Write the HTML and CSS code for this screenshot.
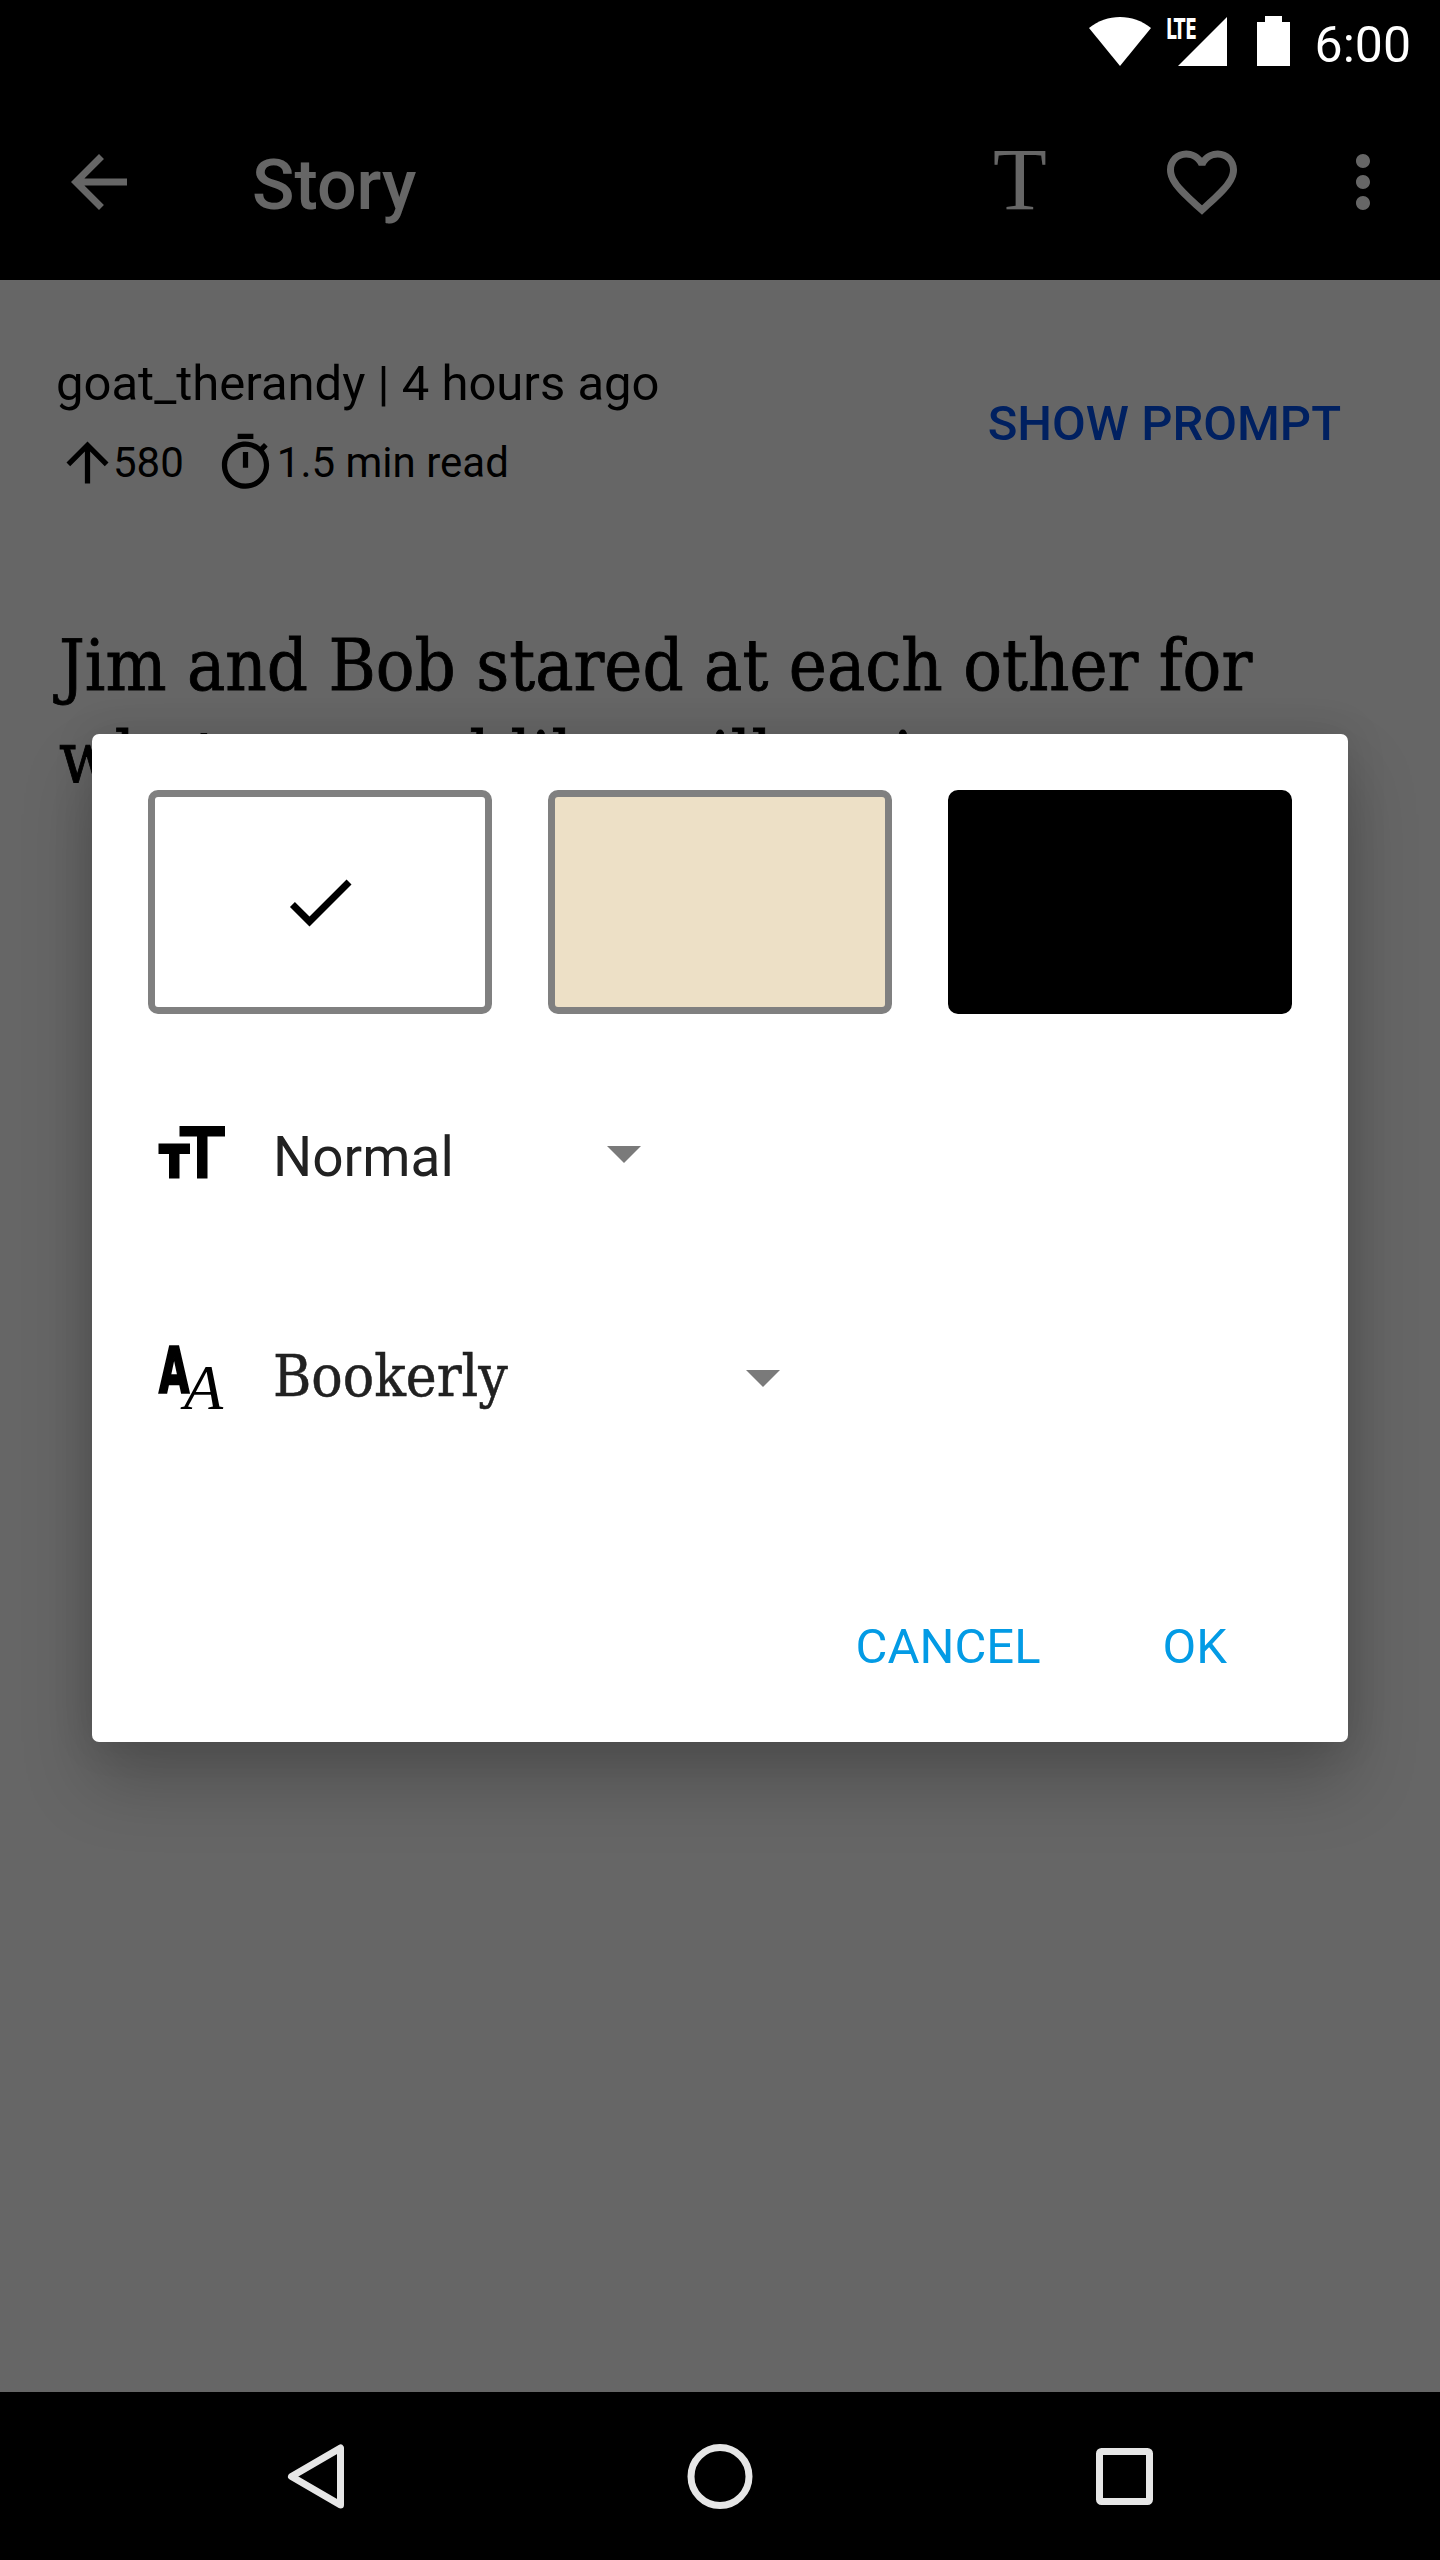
FILE: index.html
```html
<!DOCTYPE html>
<html lang="en">
<head>
    <meta charset="UTF-8">
    <title>Story</title>
    <link rel="stylesheet" href="styles.css">
</head>

<body>
<div class="screen">
    <!-- status bar -->
    <div class="statusbar">
        <svg class="st-wifi" viewBox="0 0 62 49"><path d="M0 11C18-3.6 44-3.6 62 11L31 49z"/></svg>
        <svg class="st-signal" viewBox="0 0 61 49">
            <path d="M61 0V49H12z"/>
            <text class="st-lte" x="0" y="22" textLength="31" lengthAdjust="spacingAndGlyphs">LTE</text>
        </svg>
        <svg class="st-battery" viewBox="0 0 33 50"><path d="M8 0H25V6H33V50H0V6H8z"/></svg>
        <span class="st-time">6:00</span>
    </div>

    <!-- toolbar -->
    <header class="toolbar">
        <svg class="ico back" viewBox="0 0 24 24"><path d="M20 11H7.83l5.59-5.59L12 4l-8 8 8 8 1.41-1.41L7.83 13H20v-2z"/></svg>
        <h1 class="title">Story</h1>
        <span class="tool-t">T</span>
        <svg class="ico heart" viewBox="0 0 24 24"><path d="M16.5 3c-1.74 0-3.41.81-4.5 2.09C10.91 3.81 9.24 3 7.5 3 4.42 3 2 5.42 2 8.5c0 3.78 3.4 6.86 8.55 11.54L12 21.35l1.45-1.32C18.6 15.36 22 12.28 22 8.5 22 5.42 19.58 3 16.5 3zm-4.4 15.55l-.1.1-.1-.1C7.14 14.24 4 11.39 4 8.5 4 6.5 5.5 5 7.5 5c1.54 0 3.04.99 3.57 2.36h1.87C13.46 5.99 14.96 5 16.5 5c2 0 3.5 1.5 3.5 3.5 0 2.89-3.14 5.74-7.9 10.05z"/></svg>
        <svg class="ico" viewBox="0 0 24 24"><path d="M12 8c1.1 0 2-.9 2-2s-.9-2-2-2-2 .9-2 2 .9 2 2 2zm0 2c-1.1 0-2 .9-2 2s.9 2 2 2 2-.9 2-2-.9-2-2-2zm0 6c-1.1 0-2 .9-2 2s.9 2 2 2 2-.9 2-2-.9-2-2-2z"/></svg>
    </header>

    <!-- story -->
    <main class="story">
        <div class="story-head">
            <div class="story-info">
                <p class="byline">goat_therandy | 4 hours ago</p>
                <div class="meta">
                    <svg class="meta-ico" viewBox="0 0 24 24"><path d="M4 12l1.41 1.41L11 7.83V20h2V7.83l5.58 5.59L20 12l-8-8-8 8z"/></svg>
                    <span class="votes">580</span>
                    <svg class="meta-ico timer" viewBox="0 0 24 24"><path d="M15 1H9v2h6V1zm-4 13h2V8h-2v6zm8.03-6.61l1.42-1.42c-.43-.51-.9-.99-1.41-1.41l-1.42 1.42C16.07 4.74 14.12 4 12 4c-4.97 0-9 4.03-9 9s4.02 9 9 9 9-4.03 9-9c0-2.12-.74-4.07-1.97-5.61zM12 20c-3.87 0-7-3.13-7-7s3.13-7 7-7 7 3.13 7 7-3.13 7-7 7z"/></svg>
                    <span class="readtime">1.5 min read</span>
                </div>
            </div>
            <a class="show-prompt" href="#">SHOW PROMPT</a>
        </div>
        <p class="story-text">Jim and Bob stared at each other for what seemed like millennia</p>
    </main>

    <!-- nav bar -->
    <nav class="navbar">
        <svg class="nav-ico" viewBox="0 0 84 84"><path d="M66.5 14V71L17.5 42.5z"/></svg>
        <svg class="nav-ico" viewBox="0 0 84 84"><circle cx="42" cy="42.5" r="29"/></svg>
        <svg class="nav-ico" viewBox="0 0 84 84"><rect x="17.5" y="17.5" width="50" height="50" rx="2"/></svg>
    </nav>

    <!-- dialog with scrim -->
    <div class="scrim">
        <div class="dialog">
            <div class="swatches">
                <button class="swatch swatch-white">
                    <svg class="ico" viewBox="0 0 24 24"><path d="M9 16.17L4.83 12l-1.41 1.41L9 19 21 7l-1.41-1.41z"/></svg>
                </button>
                <button class="swatch swatch-sepia"></button>
                <button class="swatch swatch-black"></button>
            </div>

            <div class="option option-size">
                <svg class="ico" viewBox="0 0 24 24"><path d="M9 4v3h5v12h3V7h5V4H9zm-6 8h3v7h3v-7h3V9H3v3z"/></svg>
                <div class="spinner spinner-size">
                    <span class="spinner-label">Normal</span>
                    <i class="caret"></i>
                </div>
            </div>

            <div class="option option-font">
                <svg class="ico aa" viewBox="0 0 84 84">
                    <text class="aa-big" transform="translate(11 56) scale(.62 1)" x="0" y="0">A</text>
                    <text class="aa-small" x="36" y="73">A</text>
                </svg>
                <div class="spinner spinner-font">
                    <span class="spinner-label bookerly">Bookerly</span>
                    <i class="caret"></i>
                </div>
            </div>

            <div class="actions">
                <a class="action" href="#">CANCEL</a>
                <a class="action" href="#">OK</a>
            </div>
        </div>
    </div>
</div>
</body>
</html>
```

FILE: styles.css
```css
html,body{
    margin: 0; padding: 0;
}
body{
    background-color: #000;
    font-family: Roboto, "Noto Sans", sans-serif;
}
p,h1{
    margin: 0;
}
a{
    text-decoration: none;
}
.screen{
    position: relative;
    width: 1440px; height: 2560px;
    display: flex; flex-direction: column;
    overflow: hidden;
}
.ico{
    width: 84px; height: 84px;
    flex: none;
    display: block;
}

/* status bar */
.statusbar{
    height: 84px;
    flex: none;
    background-color: #000;
    display: flex; align-items: flex-start; justify-content: flex-end;
    padding-right: 29px;
    box-sizing: border-box;
    fill: #fff; color: #fff;
}
.st-wifi{
    width: 62px; height: 49px;
    margin-top: 17px;
}
.st-signal{
    width: 61px; height: 49px;
    margin: 17px 0 0 15px;
    overflow: visible;
}
.st-lte{
    font-family: "DejaVu Sans Condensed", "DejaVu Sans", sans-serif;
    font-weight: bold;
    font-size: 28px;
}
.st-battery{
    width: 33px; height: 50px;
    margin: 16px 0 0 30px;
}
.st-time{
    font-size: 50px;
    line-height: 58px;
    margin: 16px 0 0 25px;
}

/* toolbar */
.toolbar{
    height: 196px;
    flex: none;
    background-color: #000;
    display: flex; align-items: center;
    padding: 0 35px 0 57px;
    fill: #fff; color: #fff;
}
.title{
    flex: 1;
    margin: 6px 0 0 111px;
    font-size: 70px;
    font-weight: 500;
}
.tool-t{
    width: 84px;
    margin: -4px 98px 0 0;
    text-align: center;
    font-family: "Liberation Serif", serif;
    font-size: 88px;
    line-height: 84px;
}
.heart{
    margin-right: 77px;
}

/* story */
.story{
    flex: 1;
    background-color: #fff;
    padding: 75px 56px 0;
    color: #000;
}
.story-head{
    display: flex; align-items: center; justify-content: space-between;
}
.byline{
    font-size: 49px;
    line-height: 58px;
}
.meta{
    display: flex; align-items: center;
    margin-top: 18px;
    font-size: 42px;
}
.meta-ico{
    width: 63px; height: 63px;
    flex: none;
}
.votes{
    margin-left: -6px;
}
.timer{
    margin-left: 30px;
}
.show-prompt{
    margin: 0 43px 3px 0;
    color: #0050f0;
    font-size: 49px;
    font-weight: 500;
}
.story-text{
    margin-top: 126px;
    padding-left: 3px;
    font-family: "DejaVu Serif Condensed", "DejaVu Serif", serif;
    font-size: 71.6px;
    line-height: 92px;
    -webkit-text-stroke: .8px #000;
}

/* nav bar */
.navbar{
    height: 168px;
    flex: none;
    background-color: #000;
    display: flex; align-items: center; justify-content: center;
    gap: 320px;
}
.nav-ico{
    width: 84px; height: 84px;
    fill: none;
    stroke: #e6e6e6; stroke-width: 7px; stroke-linejoin: round;
}

/* dialog */
.scrim{
    position: absolute;
    top: 84px; left: 0; right: 0; bottom: 168px;
    background-color: rgba(0,0,0,.6);
    padding: 650px 92px 0;
}
.dialog{
    height: 1008px;
    box-sizing: border-box;
    background-color: #fff;
    border-radius: 7px;
    box-shadow: 0 40px 70px rgba(0,0,0,.22), 0 0 40px rgba(0,0,0,.12);
    padding: 56px 56px 0;
    display: flex; flex-direction: column;
}
.swatches{
    display: flex; gap: 56px;
}
.swatch{
    width: 344px; height: 224px;
    box-sizing: border-box;
    border: 7px solid #808080;
    border-radius: 10px;
    padding: 0;
    display: flex; align-items: center; justify-content: center;
}
.swatch-white{
    background-color: #fff;
}
.swatch-sepia{
    background-color: #ede0c6;
}
.swatch-black{
    background-color: #000;
    border-color: #000;
}
.option{
    display: flex; align-items: center;
    gap: 41px;
}
.option-size{
    margin-top: 98px;
}
.option-font{
    margin-top: 140px;
}
.aa{
    overflow: visible;
}
.aa-big{
    font-family: "DejaVu Sans", sans-serif;
    font-weight: bold;
    font-size: 63px;
    stroke: #000; stroke-width: 2.5px;
}
.aa-small{
    font-family: "Liberation Serif", serif;
    font-style: italic;
    font-size: 64px;
}
.spinner{
    display: flex; align-items: center; justify-content: space-between;
    color: #212121;
    font-size: 55px;
}
.spinner-label{
    padding-top: 5px;
}
.spinner-size{
    width: 368px;
}
.spinner-font{
    width: 507px;
}
.bookerly{
    padding: 0 0 5px;
    font-family: "DejaVu Serif Condensed", "DejaVu Serif", serif;
    font-size: 58px;
    -webkit-text-stroke: .5px #212121;
}
.caret{
    width: 0; height: 0;
    border-left: 17px solid transparent;
    border-right: 17px solid transparent;
    border-top: 17px solid #7a7a7a;
}
.actions{
    display: flex; justify-content: flex-end;
    gap: 122px;
    margin-top: auto;
    padding: 0 65px 66px 0;
}
.action{
    color: #039be5;
    font-size: 49px;
    line-height: 58px;
}
```
